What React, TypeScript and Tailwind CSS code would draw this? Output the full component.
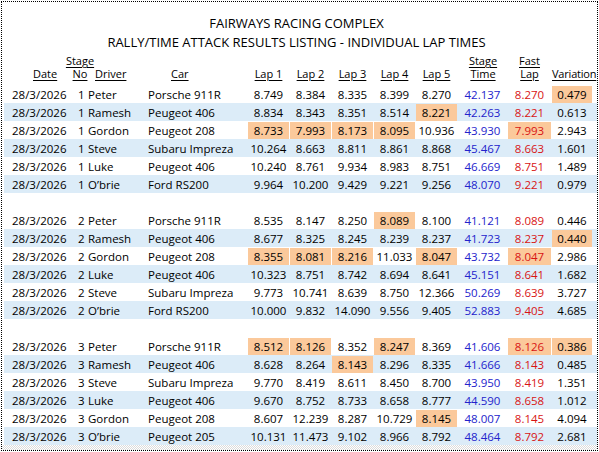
import React from "react";

type Row = {
  stage: number;
  driver: string;
  car: string;
  laps: string[];
  time: string;
  fast: string;
  variation: string;
  hl?: number[]; // 0-4 laps, 5 fast, 6 variation
};

const groups: Row[][] = [
  [
    { stage: 1, driver: "Peter", car: "Porsche 911R", laps: ["8.749", "8.384", "8.335", "8.399", "8.270"], time: "42.137", fast: "8.270", variation: "0.479", hl: [6] },
    { stage: 1, driver: "Ramesh", car: "Peugeot 406", laps: ["8.834", "8.343", "8.351", "8.514", "8.221"], time: "42.263", fast: "8.221", variation: "0.613", hl: [4] },
    { stage: 1, driver: "Gordon", car: "Peugeot 208", laps: ["8.733", "7.993", "8.173", "8.095", "10.936"], time: "43.930", fast: "7.993", variation: "2.943", hl: [0, 1, 2, 3, 5] },
    { stage: 1, driver: "Steve", car: "Subaru Impreza", laps: ["10.264", "8.663", "8.811", "8.861", "8.868"], time: "45.467", fast: "8.663", variation: "1.601" },
    { stage: 1, driver: "Luke", car: "Peugeot 406", laps: ["10.240", "8.761", "9.934", "8.983", "8.751"], time: "46.669", fast: "8.751", variation: "1.489" },
    { stage: 1, driver: "O’brie", car: "Ford RS200", laps: ["9.964", "10.200", "9.429", "9.221", "9.256"], time: "48.070", fast: "9.221", variation: "0.979" },
  ],
  [
    { stage: 2, driver: "Peter", car: "Porsche 911R", laps: ["8.535", "8.147", "8.250", "8.089", "8.100"], time: "41.121", fast: "8.089", variation: "0.446", hl: [3] },
    { stage: 2, driver: "Ramesh", car: "Peugeot 406", laps: ["8.677", "8.325", "8.245", "8.239", "8.237"], time: "41.723", fast: "8.237", variation: "0.440", hl: [6] },
    { stage: 2, driver: "Gordon", car: "Peugeot 208", laps: ["8.355", "8.081", "8.216", "11.033", "8.047"], time: "43.732", fast: "8.047", variation: "2.986", hl: [0, 1, 2, 4, 5] },
    { stage: 2, driver: "Luke", car: "Peugeot 406", laps: ["10.323", "8.751", "8.742", "8.694", "8.641"], time: "45.151", fast: "8.641", variation: "1.682" },
    { stage: 2, driver: "Steve", car: "Subaru Impreza", laps: ["9.773", "10.741", "8.639", "8.750", "12.366"], time: "50.269", fast: "8.639", variation: "3.727" },
    { stage: 2, driver: "O’brie", car: "Ford RS200", laps: ["10.000", "9.832", "14.090", "9.556", "9.405"], time: "52.883", fast: "9.405", variation: "4.685" },
  ],
  [
    { stage: 3, driver: "Peter", car: "Porsche 911R", laps: ["8.512", "8.126", "8.352", "8.247", "8.369"], time: "41.606", fast: "8.126", variation: "0.386", hl: [0, 1, 3, 5, 6] },
    { stage: 3, driver: "Ramesh", car: "Peugeot 406", laps: ["8.628", "8.264", "8.143", "8.296", "8.335"], time: "41.666", fast: "8.143", variation: "0.485", hl: [2] },
    { stage: 3, driver: "Steve", car: "Subaru Impreza", laps: ["9.770", "8.419", "8.611", "8.450", "8.700"], time: "43.950", fast: "8.419", variation: "1.351" },
    { stage: 3, driver: "Luke", car: "Peugeot 406", laps: ["9.670", "8.752", "8.733", "8.658", "8.777"], time: "44.590", fast: "8.658", variation: "1.012" },
    { stage: 3, driver: "Gordon", car: "Peugeot 208", laps: ["8.607", "12.239", "8.287", "10.729", "8.145"], time: "48.007", fast: "8.145", variation: "4.094", hl: [4] },
    { stage: 3, driver: "O’brie", car: "Peugeot 205", laps: ["10.131", "11.473", "9.102", "8.966", "8.792"], time: "48.464", fast: "8.792", variation: "2.681" },
  ],
];

const cols = "grid grid-cols-[70px_12px_60px_102px_42px_42px_42px_42px_42px_50px_44px_41px_1fr]";

// a centred value, with an orange box inset by 1px when highlighted
const Cell = ({ value, hl, color }: { value: string; hl?: boolean; color?: string }) => (
  <div className="py-px pr-px">
    <div className={`h-full flex items-center justify-center ${hl ? "bg-[#fbc99b]" : ""} ${color ?? ""}`}>
      {value}
    </div>
  </div>
);

const H = ({ children }: { children: React.ReactNode }) => (
  <span className="underline decoration-1 underline-offset-[2px] whitespace-nowrap">{children}</span>
);

const App = () => {
  return (
    <div className="w-[597px] h-[450px] m-px border border-dotted border-black bg-white text-black font-['Open_Sans',sans-serif] flex flex-col">
      <div className="pt-[12px] text-center text-[13px] leading-[19px] pr-[6px]">
        <div>FAIRWAYS RACING COMPLEX</div>
        <div>RALLY/TIME ATTACK RESULTS LISTING - INDIVIDUAL LAP TIMES</div>
      </div>

      <div className={`${cols} mt-[2px] pl-[2px] text-[11px] leading-[13px]`}>
        <div className="pl-[29px] pt-[13px]"><H>Date</H></div>
        <div className="flex flex-col items-center"><H>Stage</H><H>No</H></div>
        <div className="pl-[9px] pt-[13px]"><H>Driver</H></div>
        <div className="pl-[25px] pt-[13px]"><H>Car</H></div>
        {["Lap 1", "Lap 2", "Lap 3", "Lap 4", "Lap 5"].map((l) => (
          <div key={l} className="pt-[13px] pr-px text-center"><H>{l}</H></div>
        ))}
        <div className="flex flex-col items-center"><H>Stage</H><H>Time</H></div>
        <div className="flex flex-col items-center pr-px"><H>Fast</H><H>Lap</H></div>
        <div className="pt-[13px] text-center tracking-[-0.2px]"><H>Variation</H></div>
      </div>

      <div className="mt-[5px] pl-[2px] text-[11.5px]">
        {groups.map((g, gi) => (
          <div key={gi} className={gi > 0 ? "pt-[18px]" : ""}>
            {g.map((r, ri) => {
              const hl = r.hl ?? [];
              return (
                <div key={ri} className={`${cols} h-[18px] ${ri % 2 === 1 ? "bg-[#dcecf8]" : "bg-white"}`}>
                  <div className="pl-[8px] flex items-center">28/3/2026</div>
                  <div className="pl-[4px] flex items-center">{r.stage}</div>
                  <div className="pl-[2px] flex items-center">{r.driver}</div>
                  <div className="pl-[2px] flex items-center whitespace-nowrap">{r.car}</div>
                  {r.laps.map((l, li) => (
                    <Cell key={li} value={l} hl={hl.includes(li)} />
                  ))}
                  <Cell value={r.time} color="text-[#2323cc]" />
                  <Cell value={r.fast} hl={hl.includes(5)} color="text-[#d81414]" />
                  <Cell value={r.variation} hl={hl.includes(6)} />
                  <div />
                </div>
              );
            })}
          </div>
        ))}
      </div>

      <div className="mt-auto h-[5px] bg-[repeating-conic-gradient(#dcdcdc_0%_25%,#ffffff_0%_50%)] bg-[length:2px_2px]" />
    </div>
  );
};

export default App;
